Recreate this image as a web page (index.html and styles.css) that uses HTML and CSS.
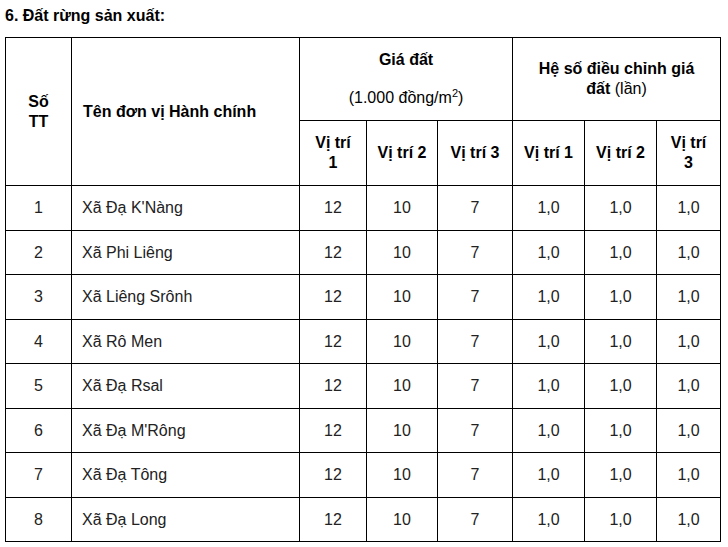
FILE: index.html
```html
<!DOCTYPE html>
<html lang="vi">
<head>
<meta charset="utf-8">
<title>Đất rừng sản xuất</title>
<link rel="stylesheet" href="styles.css">
</head>
<body>
<div class="title">6. Đất rừng sản xuất:</div>
<table class="price">
  <colgroup>
    <col class="c-stt"><col class="c-name"><col class="c-v1"><col class="c-v2"><col class="c-v3"><col class="c-h1"><col class="c-h2"><col class="c-h3">
  </colgroup>
  <thead>
    <tr class="h1">
      <th rowspan="2">Số<br>TT</th>
      <th rowspan="2" class="name-h">Tên đơn vị Hành chính</th>
      <th colspan="3"><p class="p1">Giá đất</p><p class="p2">(1.000 đồng/m<sup>2</sup>)</p></th>
      <th colspan="3">Hệ số điều chỉnh giá<br>đất <span class="normal">(lần)</span></th>
    </tr>
    <tr class="h2">
      <th>Vị trí<br>1</th><th>Vị trí 2</th><th>Vị trí 3</th><th>Vị trí 1</th><th>Vị trí 2</th><th>Vị trí<br>3</th>
    </tr>
  </thead>
  <tbody>
    <tr class="ra"><td>1</td><td class="name">Xã Đạ K'Nàng</td><td>12</td><td>10</td><td>7</td><td>1,0</td><td>1,0</td><td>1,0</td></tr>
    <tr class="rb"><td>2</td><td class="name">Xã Phi Liêng</td><td>12</td><td>10</td><td>7</td><td>1,0</td><td>1,0</td><td>1,0</td></tr>
    <tr class="ra"><td>3</td><td class="name">Xã Liêng Srônh</td><td>12</td><td>10</td><td>7</td><td>1,0</td><td>1,0</td><td>1,0</td></tr>
    <tr class="rb"><td>4</td><td class="name">Xã Rô Men</td><td>12</td><td>10</td><td>7</td><td>1,0</td><td>1,0</td><td>1,0</td></tr>
    <tr class="ra"><td>5</td><td class="name">Xã Đạ Rsal</td><td>12</td><td>10</td><td>7</td><td>1,0</td><td>1,0</td><td>1,0</td></tr>
    <tr class="rb"><td>6</td><td class="name">Xã Đạ M'Rông</td><td>12</td><td>10</td><td>7</td><td>1,0</td><td>1,0</td><td>1,0</td></tr>
    <tr class="ra"><td>7</td><td class="name">Xã Đạ Tông</td><td>12</td><td>10</td><td>7</td><td>1,0</td><td>1,0</td><td>1,0</td></tr>
    <tr class="rb"><td>8</td><td class="name">Xã Đạ Long</td><td>12</td><td>10</td><td>7</td><td>1,0</td><td>1,0</td><td>1,0</td></tr>
  </tbody>
</table>
</body>
</html>
```
FILE: styles.css
```css
html, body {
  margin: 0;
  padding: 0;
  background: #fff;
}
body {
  font-family: "Liberation Sans", Arial, sans-serif;
  font-size: 16px;
  color: #000;
}
.title {
  font-weight: bold;
  line-height: 20px;
  height: 37px;
  box-sizing: border-box;
  padding: 6px 0 0 5px;
}
.price {
  border-collapse: collapse;
  table-layout: fixed;
  width: 715px;
  margin-left: 5px;
}
.c-stt { width: 66px; }
.c-name { width: 228px; }
.c-v1 { width: 67px; }
.c-v2 { width: 71px; }
.c-v3 { width: 75px; }
.c-h1 { width: 72px; }
.c-h2 { width: 72px; }
.c-h3 { width: 64px; }
.price th, .price td {
  border: 1px solid #000;
  padding: 0 2px;
  text-align: center;
  vertical-align: middle;
  line-height: 20px;
}
.price th {
  font-weight: bold;
}
.price td {
  color: #222;
}
.price .name-h {
  text-align: left;
  padding-left: 11px;
}
.price .name {
  text-align: left;
  padding-left: 10px;
}
.h1 { height: 83px; }
.h2 { height: 65px; }
.ra { height: 45px; }
.rb { height: 44px; }
.p1, .p2 {
  margin: 0;
}
.p1 { margin-bottom: 18px; }
.p2 { font-weight: normal; }
.normal { font-weight: normal; }
sup {
  font-size: 11px;
  line-height: 0;
  vertical-align: 6px;
}
```
